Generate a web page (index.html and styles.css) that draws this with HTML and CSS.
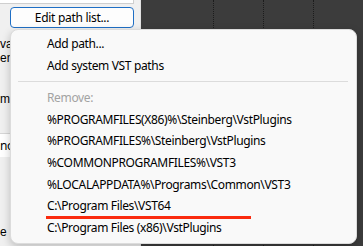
FILE: index.html
```html
<!DOCTYPE html>
<html lang="en">
<head>
    <meta charset="UTF-8">
    <meta name="viewport" content="width=device-width, initial-scale=1.0">
    <title>Edit path list</title>
    <link rel="stylesheet" href="styles.css">
</head>
<body>

<div class="window">
    <div class="panel">
        <div class="top-box"></div>
        <button type="button" class="edit-btn">Edit path list...</button>
        <div class="label first">va<br>en</div>
        <div class="label name">me</div>
        <div class="field">no</div>
        <div class="label last">e r</div>
    </div>
    <div class="canvas">
        <div class="grid-line"></div>
        <div class="grid-line"></div>
        <div class="grid-line"></div>
    </div>

    <div class="menu">
        <div class="menu-item">Add path...</div>
        <div class="menu-item">Add system VST paths</div>
        <div class="separator"></div>
        <div class="menu-item disabled">Remove:</div>
        <div class="menu-item">%PROGRAMFILES(X86)%\Steinberg\VstPlugins</div>
        <div class="menu-item">%PROGRAMFILES%\Steinberg\VstPlugins</div>
        <div class="menu-item">%COMMONPROGRAMFILES%\VST3</div>
        <div class="menu-item">%LOCALAPPDATA%\Programs\Common\VST3</div>
        <div class="menu-item">C:\Program Files\VST64</div>
        <div class="menu-item">C:\Program Files (x86)\VstPlugins</div>
        <div class="mark"></div>
    </div>
</div>

</body>
</html>
```

FILE: styles.css
```css
body {
    margin: 0;
    font-family: "Noto Sans", "Open Sans", sans-serif;
    font-size: 12px;
    letter-spacing: -0.35px;
    color: #000;
    background-color: #3c3c3c;
    overflow: hidden;
}
.window {
    position: relative;
    display: flex;
    width: 363px;
    height: 246px;
}
.panel {
    width: 146px;
    background-color: #f0f0f0;
    border-right: 1px solid #e2e2e2;
    overflow: hidden;
}
.top-box {
    width: 133px;
    height: 3px;
    background-color: #fff;
    border-right: 1px solid #cfcfcf;
    border-bottom: 1px solid #cfcfcf;
}
.edit-btn {
    display: block;
    width: 124px;
    height: 21px;
    margin: 3px 0 0 10px;
    padding: 0;
    font-family: inherit;
    font-size: 12px;
    letter-spacing: -0.3px;
    color: #000;
    background-color: #fdfdfd;
    border: 1px solid #1f6fc5;
    border-radius: 4px;
}
.label {
    font-family: "Liberation Sans", Arial, sans-serif;
    letter-spacing: 0;
    line-height: 14px;
}
.label.first {
    margin-top: 9px;
}
.label.name {
    margin-top: 27px;
}
.field {
    height: 23px;
    line-height: 23px;
    margin-top: 27px;
    background-color: #fff;
    border-top: 1px solid #d6d6d6;
}
.label.last {
    margin-top: 68px;
}
.canvas {
    flex: 1;
    display: flex;
    padding-left: 72px;
}
.grid-line {
    width: 49px;
    border-left: 1px dotted #1c1c1c;
}
.menu {
    position: absolute;
    left: 10px;
    top: 29px;
    width: 345px;
    height: 210px;
    padding-top: 3px;
    background-color: #f9f9f9;
    border: 1px solid #dcdcdc;
    border-radius: 8px;
    box-shadow: 0 3px 8px rgba(0, 0, 0, 0.22);
    box-sizing: content-box;
}
.menu-item {
    height: 22px;
    line-height: 22px;
    padding-left: 36px;
    white-space: nowrap;
}
.menu-item.disabled {
    color: #a3a3a3;
    height: 21.67px;
    line-height: 21.67px;
}
.menu-item.disabled ~ .menu-item {
    height: 21.67px;
    line-height: 21.67px;
}
.separator {
    height: 1px;
    margin: 4px 8px 5px 7px;
    background-color: #dcdcdc;
}
.mark {
    position: absolute;
    left: 35px;
    top: 186px;
    width: 205px;
    height: 3px;
    background-color: #fa2a0e;
}
```
